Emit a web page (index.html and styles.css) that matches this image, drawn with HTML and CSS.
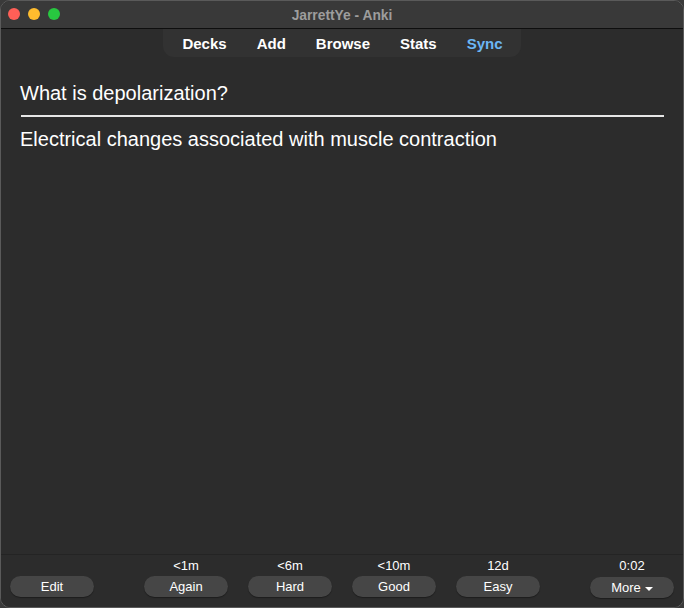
FILE: index.html
```html
<!DOCTYPE html>
<html>
<head>
<meta charset="utf-8">
<link rel="stylesheet" href="styles.css">
</head>
<body>
<div class="window">
  <div class="titlebar">
    <div class="lights">
      <span class="light red"></span>
      <span class="light yellow"></span>
      <span class="light green"></span>
    </div>
    <div class="title">JarrettYe - Anki</div>
  </div>
  <div class="toolbar">
    <nav class="nav">
      <span class="nav-item">Decks</span>
      <span class="nav-item">Add</span>
      <span class="nav-item">Browse</span>
      <span class="nav-item">Stats</span>
      <span class="nav-item sync">Sync</span>
    </nav>
  </div>
  <main class="card">
    <div class="question">What is depolarization?</div>
    <hr class="divider">
    <div class="answer">Electrical changes associated with muscle contraction</div>
  </main>
  <footer class="bottom">
    <div class="side left">
      <div class="col">
        <div class="label"></div>
        <button class="btn">Edit</button>
      </div>
    </div>
    <div class="answers">
      <div class="col"><div class="label">&lt;1m</div><button class="btn">Again</button></div>
      <div class="col"><div class="label">&lt;6m</div><button class="btn">Hard</button></div>
      <div class="col"><div class="label">&lt;10m</div><button class="btn">Good</button></div>
      <div class="col"><div class="label">12d</div><button class="btn">Easy</button></div>
    </div>
    <div class="side right">
      <div class="col">
        <div class="label">0:02</div>
        <button class="btn more">More <span class="caret"></span></button>
      </div>
    </div>
  </footer>
</div>
</body>
</html>
```
FILE: styles.css
```css
* { box-sizing: border-box; }
html, body {
  margin: 0;
  padding: 0;
  background: #3a3a3a;
  width: 684px;
  height: 608px;
  overflow: hidden;
}
body {
  font-family: "Liberation Sans", Arial, sans-serif;
  color: #fff;
}
.window {
  width: 684px;
  height: 608px;
  background: #2c2c2c;
  border: 1px solid #5a5a5a;
  border-radius: 10px;
  overflow: hidden;
  display: flex;
  flex-direction: column;
}
.titlebar {
  height: 28px;
  flex: 0 0 28px;
  background: #393939;
  border-bottom: 1px solid #0e0e0e;
  position: relative;
  display: flex;
  align-items: center;
  justify-content: center;
}
.lights {
  position: absolute;
  left: 7px;
  top: 7px;
  display: flex;
  gap: 8px;
}
.light {
  width: 12px;
  height: 12px;
  border-radius: 50%;
  display: block;
}
.red { background: #fe5f57; }
.yellow { background: #febc2e; }
.green { background: #28c840; }
.title {
  font-size: 13.8px;
  font-weight: bold;
  color: #9d9d9d;
  margin-top: 1px;
}
.toolbar {
  display: flex;
  justify-content: center;
}
.nav {
  display: flex;
  align-items: center;
  gap: 30px;
  height: 28px;
  padding: 0 18px 0 19px;
  background: #323232;
  border-radius: 0 0 11px 11px;
}
.nav-item {
  font-size: 15px;
  font-weight: bold;
  color: #fff;
}
.nav-item.sync { color: #6cb6f5; }
.card {
  flex: 1;
  padding: 24px 19px 0 19px;
}
.question {
  font-size: 20px;
  line-height: 24px;
}
.divider {
  border: none;
  height: 2px;
  background: #e6e6e6;
  margin: 10px 0 10px 1px;
}
.answer {
  font-size: 20px;
  line-height: 24px;
}
.bottom {
  flex: 0 0 53px;
  height: 53px;
  border-top: 1px solid #242424;
  background: #2c2c2c;
  display: grid;
  grid-template-columns: 1fr auto 1fr;
  padding: 0 9px 0 9px;
}
.side { display: flex; }
.side.right { justify-content: flex-end; }
.answers {
  display: flex;
  gap: 20px;
}
.col {
  display: flex;
  flex-direction: column;
  align-items: center;
}
.label {
  height: 21px;
  font-size: 13px;
  line-height: 20px;
  padding-top: 1px;
  color: #fff;
}
.btn {
  width: 84px;
  height: 21px;
  border: none;
  border-radius: 11px;
  background: #464646;
  color: #fff;
  font-family: "Liberation Sans", Arial, sans-serif;
  font-size: 13px;
  padding: 0;
  display: flex;
  align-items: center;
  justify-content: center;
  box-shadow: 0 1px 1px rgba(0,0,0,0.35);
}
.btn.more { margin-top: 1px; }
.caret {
  display: inline-block;
  width: 0;
  height: 0;
  margin-left: 4px;
  margin-top: 2px;
  border-left: 4px solid transparent;
  border-right: 4px solid transparent;
  border-top: 4px solid #fff;
}
```
